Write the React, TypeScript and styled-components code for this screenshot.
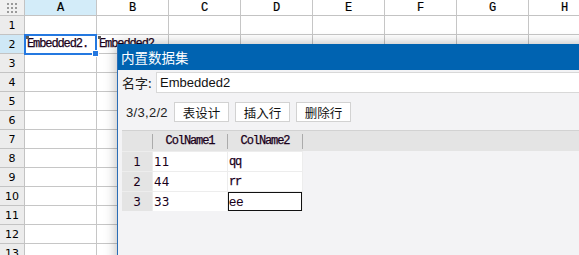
import React from 'react'
import styled, { createGlobalStyle } from 'styled-components'

const GlobalStyle = createGlobalStyle`
  html, body {
    margin: 0;
    padding: 0;
    background: #fff;
    overflow: hidden;
  }
`

const MONO = `"Liberation Mono", "Noto Sans CJK SC", monospace`
const SANS = `"Liberation Sans", "Noto Sans CJK SC", sans-serif`
const TAHOMA = `"DejaVu Sans", "Liberation Sans", sans-serif`
const CJK = `"Noto Sans CJK SC", "Liberation Sans", sans-serif`

const COLS = ['A', 'B', 'C', 'D', 'E', 'F', 'G', 'H']
const ROWS = Array.from({ length: 13 }, (_, i) => i + 1)

const Sheet = styled.div`
  position: relative;
  width: 579px;
  height: 255px;
  overflow: hidden;
`

const Grid = styled.div`
  display: grid;
  grid-template-columns: 25px repeat(8, 72px);
  grid-template-rows: 16px repeat(13, 19px);
`

const Corner = styled.div`
  background: #f0f0f0;
  border-right: 1px solid #c3c3c3;
  border-bottom: 1px solid #c3c3c3;
  box-sizing: border-box;
  display: flex;
  align-items: center;
  justify-content: center;
`

const ColHead = styled.div<{ $active?: boolean }>`
  background: ${({ $active }) => ($active ? '#d3ecf9' : '#fff')};
  border-right: 1px solid #c6c6c6;
  border-bottom: 1px solid #c3c3c3;
  box-sizing: border-box;
  display: flex;
  align-items: center;
  justify-content: center;
  font: 12px ${MONO};
  -webkit-text-stroke: 0.2px currentColor;
  color: #000;
`

const RowHead = styled.div<{ $active?: boolean }>`
  background: ${({ $active }) => ($active ? '#cfe8f6' : '#ececec')};
  border-right: 1px solid #c3c3c3;
  border-bottom: 1px solid #c3c3c3;
  box-sizing: border-box;
  display: flex;
  align-items: center;
  justify-content: center;
  font: 11px ${TAHOMA};
  color: #000;
`

const Cell = styled.div<{ $marked?: boolean }>`
  position: relative;
  border-right: 1px solid #c6c6c6;
  border-bottom: 1px solid #c6c6c6;
  box-sizing: border-box;
  display: flex;
  align-items: center;
  padding-left: 2px;
  font: 12px ${MONO};
  letter-spacing: -1.1px;
  -webkit-text-stroke: 0.25px currentColor;
  color: #1a001a;
  white-space: nowrap;
  overflow: visible;

  ${({ $marked }) =>
    $marked &&
    `
    &::before {
      content: '';
      position: absolute;
      left: 1px;
      top: 1px;
      width: 3px;
      height: 3px;
      background: #5a5a5a;
    }
  `}
`

const Selection = styled.div`
  position: absolute;
  left: 24px;
  top: 34px;
  width: 73px;
  height: 21px;
  border: 2px solid #2478e0;
  box-sizing: border-box;
  pointer-events: none;

  &::after {
    content: '';
    position: absolute;
    right: -4px;
    bottom: -4px;
    width: 5px;
    height: 5px;
    background: #2478e0;
    border: 1px solid #fff;
  }
`

const Dialog = styled.div`
  position: absolute;
  left: 117px;
  top: 44px;
  width: 480px;
  height: 230px;
  background: #f3f3f5;
  border-left: 1px solid #2a6db6;
  box-shadow: 0 0 12px rgba(0, 0, 0, 0.3);
  display: flex;
  flex-direction: column;
`

const TitleBar = styled.div`
  height: 26px;
  background: #0063b1;
  color: #fff;
  font: 13.5px ${CJK};
  display: flex;
  align-items: center;
  padding-left: 3px;
`

const Body = styled.div`
  padding: 2px 0 0 4px;
  display: flex;
  flex-direction: column;
`

const NameRow = styled.div`
  display: flex;
  align-items: center;
  height: 21px;
`

const Label = styled.span`
  width: 34px;
  font: 13px ${CJK};
  color: #222;
`

const NameInput = styled.div`
  flex: 1;
  height: 21px;
  box-sizing: border-box;
  background: #fff;
  border: 1px solid #d8d8d8;
  border-right: none;
  display: flex;
  align-items: center;
  padding-left: 3px;
  font: 13px ${SANS};
  color: #111;
`

const Toolbar = styled.div`
  display: flex;
  align-items: center;
  gap: 6px;
  margin-top: 9px;
  height: 20px;
`

const Counter = styled.span`
  width: 42px;
  padding-left: 4px;
  font: 13px ${SANS};
  letter-spacing: 0.3px;
  color: #222;
  white-space: nowrap;
`

const ToolButton = styled.button`
  width: 55px;
  height: 20px;
  box-sizing: border-box;
  background: #fff;
  border: 1px solid #d2d2d2;
  padding: 0;
  font: 12.5px ${CJK};
  color: #111;
  display: flex;
  align-items: center;
  justify-content: center;
`

const Table = styled.div`
  margin-top: 8px;
  display: flex;
  flex-direction: column;
`

const HeadBand = styled.div`
  display: grid;
  grid-template-columns: 31px 75px 75px 1fr;
  align-items: center;
  height: 21px;
  box-sizing: border-box;
  background: #e4e4e4;
  border-top: 1px solid #d2d2d2;
`

const HeadCell = styled.div<{ $sep?: boolean }>`
  height: 15px;
  display: flex;
  align-items: center;
  justify-content: center;
  border-right: ${({ $sep }) => ($sep ? '1px solid #ababab' : 'none')};
  font: 12px ${MONO};
  letter-spacing: -1.1px;
  -webkit-text-stroke: 0.25px currentColor;
  color: #1a001a;
`

const Rows = styled.div`
  display: grid;
  grid-template-columns: 30px 74px 74px;
  grid-auto-rows: 19px;
  gap: 1px;
  padding-top: 1px;
  width: 181px;
  background: #ededed;
`

const IndexCell = styled.div`
  background: #e4e4e4;
  display: flex;
  align-items: center;
  justify-content: center;
  font: 12px ${TAHOMA};
  color: #1a001a;
`

type Kind = 'mono' | 'num' | 'edit'

const DataCell = styled.div<{ $kind: Kind }>`
  background: #fff;
  box-sizing: border-box;
  border: ${({ $kind }) => ($kind === 'edit' ? '1px solid #111' : 'none')};
  display: flex;
  align-items: center;
  padding-left: ${({ $kind }) => ($kind === 'edit' ? '0' : '1px')};
  font: ${({ $kind }) =>
    $kind === 'edit' ? `13px ${SANS}` : $kind === 'num' ? `12px ${TAHOMA}` : `12px ${MONO}`};
  letter-spacing: ${({ $kind }) => ($kind === 'mono' ? '-1.1px' : '0')};
  -webkit-text-stroke: ${({ $kind }) => ($kind === 'mono' ? '0.25px currentColor' : '0')};
  color: #1a001a;
`

const GridIcon = () => (
  <svg width="12" height="10" viewBox="0 0 12 10">
    {[0, 4, 8].map((y) =>
      [0, 4, 8].map((x) => <rect key={`${x}-${y}`} x={x + 1} y={y} width="2" height="2" fill="#9a9a9a" />),
    )}
  </svg>
)

const cellText = (row: number, col: string) => {
  if (row === 2 && col === 'A') return 'Embedded2.'
  if (row === 2 && col === 'B') return 'Embedded2'
  return ''
}

const tableRows = [
  { id: 1, a: '11', b: 'qq' },
  { id: 2, a: '44', b: 'rr' },
  { id: 3, a: '33', b: 'ee' },
]

const App = () => (
  <>
    <GlobalStyle />
    <Sheet>
      <Grid>
        <Corner>
          <GridIcon />
        </Corner>
        {COLS.map((c) => (
          <ColHead key={c} $active={c === 'A'}>
            {c}
          </ColHead>
        ))}
        {ROWS.map((r) => (
          <React.Fragment key={r}>
            <RowHead $active={r === 2}>{r}</RowHead>
            {COLS.map((c) => (
              <Cell key={c} $marked={r === 2 && (c === 'A' || c === 'B')}>
                {cellText(r, c)}
              </Cell>
            ))}
          </React.Fragment>
        ))}
      </Grid>
      <Selection />

      <Dialog>
        <TitleBar>内置数据集</TitleBar>
        <Body>
          <NameRow>
            <Label>名字:</Label>
            <NameInput>Embedded2</NameInput>
          </NameRow>
          <Toolbar>
            <Counter>3/3,2/2</Counter>
            <ToolButton>表设计</ToolButton>
            <ToolButton>插入行</ToolButton>
            <ToolButton>删除行</ToolButton>
          </Toolbar>
          <Table>
            <HeadBand>
              <HeadCell $sep />
              <HeadCell $sep>ColName1</HeadCell>
              <HeadCell $sep>ColName2</HeadCell>
              <span />
            </HeadBand>
            <Rows>
              {tableRows.map((row) => (
                <React.Fragment key={row.id}>
                  <IndexCell>{row.id}</IndexCell>
                  <DataCell $kind="num">{row.a}</DataCell>
                  <DataCell $kind={row.id === 3 ? 'edit' : 'mono'}>{row.b}</DataCell>
                </React.Fragment>
              ))}
            </Rows>
          </Table>
        </Body>
      </Dialog>
    </Sheet>
  </>
)

export default App
